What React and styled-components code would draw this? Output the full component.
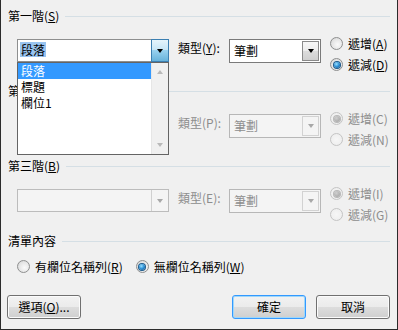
import React from 'react';
import styled, { createGlobalStyle, css } from 'styled-components';

const Global = createGlobalStyle`
  html, body { margin: 0; padding: 0; background: #f0f0f0; }
  body {
    font-family: "Noto Sans CJK TC", "Noto Sans", sans-serif;
    font-size: 12px;
    color: #000;
  }
  * { box-sizing: border-box; }
`;

const Dialog = styled.div`
  position: relative;
  width: 398px;
  height: 330px;
  background: #f0f0f0;
  border: 1px solid #2b2b2b;
  border-top: none;
  padding: 9px 7px 0 7px;
  display: flex;
  flex-direction: column;
`;

const Level = styled.section`
  height: 75px;
  display: flex;
  flex-direction: column;
`;

const Header = styled.div`
  display: flex;
  align-items: center;
  height: 14px;
  gap: 6px;
  line-height: 14px;
  white-space: nowrap;
`;

const Title = styled.span`
  ${(p) =>
    p.$clip &&
    css`
      display: inline-block;
      width: 9px;
      overflow: hidden;
    `}
`;

const Rule = styled.div`
  flex: 1;
  height: 1px;
  background: #d5dfe5;
`;

const Key = styled.span`
  text-decoration: ${(p) => (p.$off ? 'none' : 'underline')};
  text-underline-offset: 1px;
`;

const Row = styled.div`
  display: flex;
  align-items: flex-start;
  margin-top: 10px;
  padding-left: 9px;
`;

const FieldCombo = styled.div`
  position: relative;
  width: 152px;
  height: 23px;
  margin-top: 6px;
  display: flex;
  border: 1px solid ${(p) => (p.$disabled ? '#bcbcbc' : '#8e8f8f')};
  background: ${(p) => (p.$disabled ? '#f4f4f4' : '#fff')};
`;

const FieldText = styled.div`
  flex: 1;
  padding: 2px 0 0 2px;
  line-height: 15px;
`;

const Selected = styled.span`
  display: inline-block;
  background: #99c4f0;
  padding: 0 1px;
`;

const ComboButton = styled.div`
  width: 17px;
  display: flex;
  align-items: center;
  justify-content: center;
  ${(p) =>
    p.$active
      ? css`
          margin: -1px -1px -1px 0;
          width: 18px;
          border: 1px solid #3c7fb1;
          background: linear-gradient(#e5f4fc 0%, #c4e5f6 50%, #98d1ef 50%, #68b3db 100%);
        `
      : p.$disabled
      ? css`
          border-left: 1px solid #d0d0d0;
          background: #f4f4f4;
        `
      : css`
          border-left: 1px solid #a0a0a0;
          background: linear-gradient(#f4f4f4 0%, #ebebeb 50%, #dddddd 50%, #d0d0d0 100%);
        `}
`;

const Arrow = styled.span`
  width: 0;
  height: 0;
  border-left: 3.5px solid transparent;
  border-right: 3.5px solid transparent;
  border-top: 4px solid ${(p) => (p.$disabled ? '#a8a8a8' : '#000')};
  ${(p) => p.$up && css`
    border-top: none;
    border-bottom: 4px solid ${p.$color};
  `}
  ${(p) => p.$color && !p.$up && css`border-top-color: ${p.$color};`}
`;

const DropList = styled.div`
  position: absolute;
  top: 22px;
  left: -1px;
  width: 152px;
  height: 93px;
  border: 1px solid #646464;
  background: #fff;
  display: flex;
  z-index: 5;
`;

const Items = styled.div`
  flex: 1;
  display: flex;
  flex-direction: column;
`;

const Item = styled.div`
  height: 16px;
  line-height: 16px;
  padding-left: 3px;
  background: ${(p) => (p.$hi ? '#3399ff' : 'transparent')};
  color: ${(p) => (p.$hi ? '#fff' : '#000')};
`;

const Scroll = styled.div`
  width: 17px;
  background: #f0f0f0;
  border-left: 1px solid #e6e6e6;
  display: flex;
  flex-direction: column;
  justify-content: space-between;
  align-items: center;
  padding: 7px 0 7px;
`;

const TypeLabel = styled.div`
  width: 51px;
  margin-left: 9px;
  margin-top: 8px;
  line-height: 14px;
  white-space: nowrap;
  color: ${(p) => (p.$disabled ? '#8d8d8d' : '#000')};
`;

const TypeCombo = styled.div`
  width: 92px;
  height: 24px;
  margin-top: 6px;
  display: flex;
  border: 1px solid ${(p) => (p.$disabled ? '#b7b7b7' : '#7a7a7a')};
  background: ${(p) => (p.$disabled ? '#f4f4f4' : '#fff')};
  color: ${(p) => (p.$disabled ? '#8d8d8d' : '#000')};
`;

const TypeText = styled.div`
  flex: 1;
  padding: 4px 0 0 4px;
  line-height: 14px;
`;

const TypeButton = styled.div`
  width: 17px;
  margin: 1px;
  display: flex;
  align-items: center;
  justify-content: center;
  border: 1px solid ${(p) => (p.$disabled ? '#d2d2d2' : '#8a8a8a')};
  background: ${(p) =>
    p.$disabled ? '#f4f4f4' : 'linear-gradient(#f6f6f6 0%, #ececec 50%, #dcdcdc 50%, #cfcfcf 100%)'};
`;

const RadioCol = styled.div`
  display: flex;
  flex-direction: column;
  margin-left: 9px;
`;

const RadioItem = styled.label`
  display: flex;
  align-items: center;
  gap: 5px;
  height: ${(p) => (p.$h ? p.$h : 21)}px;
  white-space: nowrap;
  color: ${(p) => (p.$disabled ? '#8d8d8d' : '#000')};
`;

const Circle = styled.span`
  position: relative;
  width: 13px;
  height: 13px;
  border-radius: 50%;
  flex: none;
  border: 1px solid ${(p) => (p.$disabled ? '#c4c4c4' : '#8e8f8f')};
  background: ${(p) =>
    p.$disabled
      ? 'radial-gradient(circle at 50% 50%, #f6f6f6 0%, #ececec 100%)'
      : 'radial-gradient(circle at 60% 60%, #fafafa 0%, #e6e6e6 55%, #cfcfcf 100%)'};
  ${(p) =>
    p.$checked &&
    css`
      &::after {
        content: '';
        position: absolute;
        left: 2.5px;
        top: 2.5px;
        width: 6px;
        height: 6px;
        border-radius: 50%;
        background: ${p.$disabled
          ? 'radial-gradient(circle at 40% 35%, #d0d0d0 0%, #9c9c9c 100%)'
          : 'radial-gradient(circle at 40% 35%, #9be0ff 0%, #2a8fd6 50%, #10477a 100%)'};
        box-shadow: 0 0 0 1px ${p.$disabled ? '#b8b8b8' : '#1c5a8c'};
      }
    `}
`;

const Radio = ({ checked, disabled, label, k, h }) => (
  <RadioItem $disabled={disabled} $h={h}>
    <Circle $checked={checked} $disabled={disabled} />
    <span>
      {label}(<Key $off={disabled}>{k}</Key>)
    </span>
  </RadioItem>
);

const ListRow = styled.div`
  display: flex;
  align-items: center;
  margin-top: 10px;
  padding-left: 9px;
  gap: 13px;
`;

const Footer = styled.div`
  display: flex;
  margin-top: 20px;
  margin-left: -1px;
`;

const Spacer = styled.div`
  flex: 1;
`;

const Button = styled.button`
  width: 74px;
  height: 24px;
  margin-left: ${(p) => (p.$gap ? p.$gap : 0)}px;
  font: inherit;
  color: #000;
  padding: 0;
  border-radius: 3px;
  border: 1px solid ${(p) => (p.$default ? '#3399ff' : '#707070')};
  box-shadow: ${(p) => (p.$default ? 'inset 0 0 0 1px #9fd7fa' : 'inset 0 0 0 1px #fbfbfb')};
  background: linear-gradient(#f2f2f2 0%, #ebebeb 50%, #dddddd 50%, #cfcfcf 100%);
  line-height: 20px;
`;

const levels = [
  { title: '第一階', key: 'S', field: '段落', typeKey: 'Y', asc: 'A', desc: 'D', disabled: false, checked: 'desc', open: true },
  { title: '第二階', key: 'T', field: '', typeKey: 'P', asc: 'C', desc: 'N', disabled: true, checked: 'asc', covered: true },
  { title: '第三階', key: 'B', field: '', typeKey: 'E', asc: 'I', desc: 'G', disabled: true, checked: 'asc' },
];

const options = ['段落', '標題', '欄位1'];

export default function App() {
  return (
    <>
      <Global />
      <Dialog>
        {levels.map((lv) => (
          <Level key={lv.title}>
            <Header>
              <Title $clip={lv.covered}>
                {lv.title}(<Key>{lv.key}</Key>)
              </Title>
              <Rule />
            </Header>
            <Row>
              <FieldCombo $disabled={lv.disabled}>
                <FieldText>{lv.field && <Selected>{lv.field}</Selected>}</FieldText>
                <ComboButton $active={lv.open} $disabled={lv.disabled}>
                  <Arrow $disabled={lv.disabled} />
                </ComboButton>
                {lv.open && (
                  <DropList>
                    <Items>
                      {options.map((o, i) => (
                        <Item key={o} $hi={i === 0}>
                          {o}
                        </Item>
                      ))}
                    </Items>
                    <Scroll>
                      <Arrow $up $color="#b9b9b9" />
                      <Arrow $color="#b9b9b9" />
                    </Scroll>
                  </DropList>
                )}
              </FieldCombo>
              <TypeLabel $disabled={lv.disabled}>
                類型(<Key $off={lv.disabled}>{lv.typeKey}</Key>):
              </TypeLabel>
              <TypeCombo $disabled={lv.disabled}>
                <TypeText>筆劃</TypeText>
                <TypeButton $disabled={lv.disabled}>
                  <Arrow $disabled={lv.disabled} />
                </TypeButton>
              </TypeCombo>
              <RadioCol>
                <Radio label="遞增" k={lv.asc} checked={lv.checked === 'asc'} disabled={lv.disabled} />
                <Radio label="遞減" k={lv.desc} checked={lv.checked === 'desc'} disabled={lv.disabled} />
              </RadioCol>
            </Row>
          </Level>
        ))}
        <section>
          <Header>
            <span>清單內容</span>
            <Rule />
          </Header>
          <ListRow>
            <Radio label="有欄位名稱列" k="R" h={17} />
            <Radio label="無欄位名稱列" k="W" checked h={17} />
          </ListRow>
        </section>
        <Footer>
          <Button>
            選項(<Key>O</Key>)...
          </Button>
          <Spacer />
          <Button $default>確定</Button>
          <Button $gap={10}>取消</Button>
        </Footer>
      </Dialog>
    </>
  );
}
